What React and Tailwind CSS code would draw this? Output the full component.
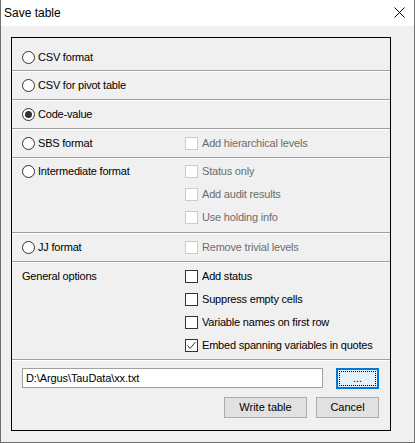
// App.jsx — Save table dialog
import React from 'react';

const FONT = { fontFamily: '"Liberation Sans", Arial, sans-serif' };

const Sep = () => (
  <>
    <div className="h-px bg-[#a0a0a0]" />
    <div className="h-px bg-white" />
  </>
);

const Radio = ({ label, checked }) => (
  <div className="flex items-center">
    <span className="w-[13px] h-[13px] rounded-full border border-[#333333] bg-white flex items-center justify-center shrink-0">
      {checked && <span className="w-[7px] h-[7px] rounded-full bg-[#333333]" />}
    </span>
    <span className="ml-[3px] text-[11px] tracking-[-0.2px] text-black leading-none">{label}</span>
  </div>
);

const Check = ({ label, checked, disabled }) => (
  <div className="flex items-center h-[23px]">
    <span
      className={`w-[13px] h-[13px] border bg-white flex items-center justify-center shrink-0 ${
        disabled ? 'border-[#cccccc]' : 'border-[#333333]'
      }`}
    >
      {checked && (
        <svg width="11" height="11" viewBox="0 0 11 11">
          <polyline points="1.5,5.5 4,8.5 9.5,2" fill="none" stroke="#333333" strokeWidth="1" />
        </svg>
      )}
    </span>
    <span className={`ml-[4px] text-[11px] tracking-[-0.2px] leading-none ${disabled ? 'text-[#6d6d6d]' : 'text-black'}`}>
      {label}
    </span>
  </div>
);

const Row = ({ h, left, right, pt = '' }) => (
  <div className={`flex ${h} ${pt}`}>
    <div className="w-[173px] pl-[10px]">{left}</div>
    <div className="flex-1">{right}</div>
  </div>
);

export default function App() {
  return (
    <div className="w-[415px] h-[443px] bg-[#f0f0f0] border-x border-b border-[#707070] flex flex-col" style={FONT}>
      <div className="h-[26px] bg-white flex items-center justify-between pl-[3px] pr-[9px] shrink-0">
        <span className="text-[12px] text-black">Save table</span>
        <svg width="11" height="11" viewBox="0 0 11 11" className="mb-[1px]">
          <path d="M0.5 0.5 L10.5 10.5 M10.5 0.5 L0.5 10.5" stroke="#000" strokeWidth="1" />
        </svg>
      </div>

      <div className="pt-[11px] pl-[10px]">
        <div className="w-[380px] h-[394px] border border-black flex flex-col">
          <div className="h-[32px] pt-[6px] pl-[10px] flex items-center">
            <Radio label="CSV format" />
          </div>
          <Sep />
          <div className="h-[27px] pl-[10px] flex items-center">
            <Radio label="CSV for pivot table" />
          </div>
          <Sep />
          <div className="h-[27px] pl-[10px] flex items-center">
            <Radio label="Code-value" checked />
          </div>
          <Sep />
          <div className="h-[27px] flex items-center">
            <div className="w-[173px] pl-[10px]">
              <Radio label="SBS format" />
            </div>
            <Check label="Add hierarchical levels" disabled />
          </div>
          <Sep />
          <Row
            h="h-[73px]"
            pt="pt-px"
            left={
              <div className="h-[23px] flex items-center">
                <Radio label="Intermediate format" />
              </div>
            }
            right={
              <>
                <Check label="Status only" disabled />
                <Check label="Add audit results" disabled />
                <Check label="Use holding info" disabled />
              </>
            }
          />
          <Sep />
          <div className="h-[27px] flex items-center">
            <div className="w-[173px] pl-[10px]">
              <Radio label="JJ format" />
            </div>
            <Check label="Remove trivial levels" disabled />
          </div>
          <Sep />
          <Row
            h="h-[96px]"
            pt="pt-[2px]"
            left={
              <div className="h-[23px] flex items-center">
                <span className="text-[11px] tracking-[-0.2px] text-black leading-none">General options</span>
              </div>
            }
            right={
              <>
                <Check label="Add status" />
                <Check label="Suppress empty cells" />
                <Check label="Variable names on first row" />
                <Check label="Embed spanning variables in quotes" checked />
              </>
            }
          />
          <Sep />
          <div className="flex-1 pt-[7px] pl-[10px] pr-[11px]">
            <div className="flex items-start">
              <div className="w-[301px] h-[20px] bg-white border border-[#a0a0a0] flex items-center pl-[3px] text-[11px] tracking-[-0.1px] text-black">
                D:\Argus\TauData\xx.txt
              </div>
              <button className="ml-auto w-[43px] h-[21px] border-2 border-[#0078d7] bg-[#e5f1fb] p-px flex">
                <span className="flex-1 border border-dotted border-black flex items-center justify-center text-[11px] text-black leading-none">
                  ...
                </span>
              </button>
            </div>
            <div className="flex justify-end gap-[9px] mt-[8px]">
              <button className="w-[83px] h-[21px] bg-[#e1e1e1] border border-[#adadad] text-[11px] text-black">
                Write table
              </button>
              <button className="w-[63px] h-[21px] bg-[#e1e1e1] border border-[#adadad] text-[11px] text-black">
                Cancel
              </button>
            </div>
          </div>
        </div>
      </div>
    </div>
  );
}
